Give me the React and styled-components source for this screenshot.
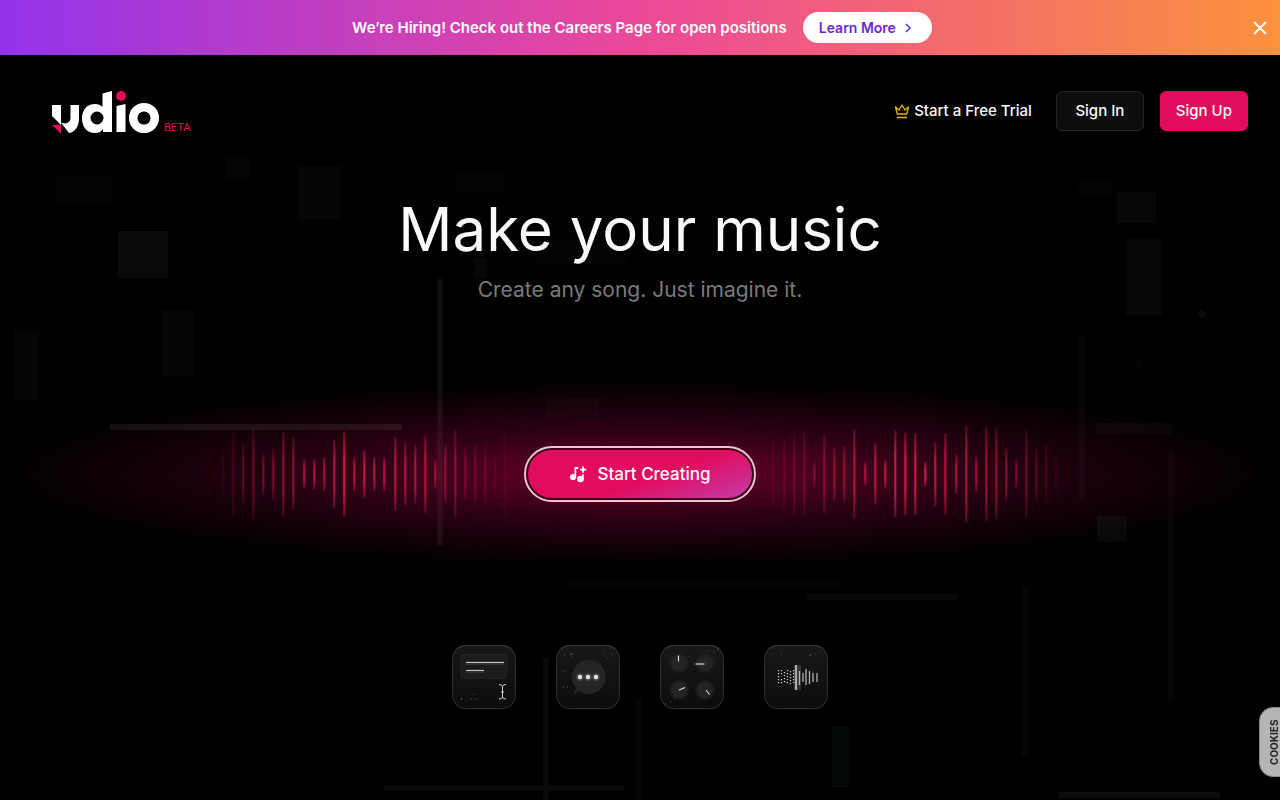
import React from "react";
import styled, { createGlobalStyle } from "styled-components";

const GlobalStyle = createGlobalStyle`
  * {
    box-sizing: border-box;
  }
  body {
    margin: 0;
    background: #000;
    color: #fafafa;
    font-family: Inter, "Liberation Sans", sans-serif;
  }
  a {
    color: inherit;
    text-decoration: none;
  }
`;

const Page = styled.div`
  position: relative;
  min-height: 100vh;
  overflow: hidden;
  background: #000;
`;

const Backdrop = styled.svg`
  position: absolute;
  inset: 0;
  z-index: 1;
  width: 100%;
  height: 100%;
  mix-blend-mode: screen;
  pointer-events: none;
`;

const Banner = styled.div`
  position: relative;
  display: flex;
  align-items: center;
  padding: 12px 12px 12px 32px;
  background: linear-gradient(to right, #9333ea, #ec4899 50%, #fb923c);
`;

const BannerContent = styled.div`
  flex: 1;
  display: flex;
  align-items: center;
  justify-content: center;
  gap: 16px;
`;

const BannerText = styled.p`
  margin: 0;
  font-size: 15px;
  line-height: 20px;
  font-weight: 600;
  color: #fff;
`;

const LearnMore = styled.a`
  display: flex;
  align-items: center;
  gap: 8px;
  padding: 6px 20px 5px 16px;
  border-radius: 20px;
  background: #fff;
  && {
    color: #6d28d9;
  }
  font-size: 14px;
  line-height: 20px;
  font-weight: 600;
`;

const CloseButton = styled.button`
  display: flex;
  padding: 0;
  border: none;
  background: none;
  color: #fff;
  cursor: pointer;
`;

const Header = styled.header`
  position: relative;
  display: flex;
  align-items: flex-start;
  justify-content: space-between;
  padding: 36px 32px 0 52px;
`;

const Brand = styled.a`
  display: flex;
  align-items: flex-end;
  gap: 4px;
`;

const Beta = styled.span`
  && {
    color: #e30b5d;
  }
  font-family: Roboto, sans-serif;
  font-size: 11px;
  line-height: 10px;
`;

const Nav = styled.nav`
  display: flex;
  align-items: center;
  gap: 16px;
`;

const TrialLink = styled.a`
  display: flex;
  align-items: center;
  gap: 4px;
  padding-right: 8px;
  font-size: 15px;
  line-height: 20px;
  font-weight: 500;
`;

const NavButton = styled.button`
  height: 40px;
  min-width: 88px;
  padding: 0 15px 2px;
  border: 1px solid ${({ $primary }) => ($primary ? "#e30b5d" : "#262626")};
  border-radius: 6px;
  background: ${({ $primary }) => ($primary ? "#e30b5d" : "#0d0d0d")};
  color: #fafafa;
  font-family: inherit;
  font-size: 15px;
  font-weight: 500;
  cursor: pointer;
`;

const Main = styled.main`
  position: relative;
  display: flex;
  flex-direction: column;
  align-items: center;
  padding: 60px 0 88px;
`;

const Title = styled.h1`
  margin: 0;
  font-size: 60px;
  line-height: 72px;
  font-weight: 400;
  text-align: center;
`;

const Subtitle = styled.p`
  margin: 10px 0 0;
  font-size: 21px;
  line-height: 30px;
  color: #7a7a7a;
  text-align: center;
`;

const Stage = styled.section`
  display: grid;
  place-items: center;
  width: 100%;
  margin-top: 64px;
  background: radial-gradient(
    ellipse 50% 44% at center,
    #74002f 0%,
    #52001f 20%,
    #300014 45%,
    #19000b 70%,
    #000 100%
  );
  & > * {
    grid-area: 1 / 1;
  }
`;

const Wave = styled.svg`
  width: 880px;
  height: 210px;
`;

const CreateRing = styled.div`
  padding: 2px;
  border: 2px solid #ecc5d5;
  border-radius: 28px;
  background: #3c0019;
`;

const CreateButton = styled.button`
  display: flex;
  align-items: center;
  gap: 8px;
  height: 48px;
  padding: 0 41px;
  border: none;
  border-radius: 24px;
  background: linear-gradient(160deg, #e30b5d 55%, #c43ca8 100%);
  color: #fff;
  font-family: inherit;
  font-size: 17px;
  font-weight: 500;
  cursor: pointer;
`;

const Features = styled.div`
  display: flex;
  gap: 40px;
  margin-top: 66px;
`;

const FeatureButton = styled.button`
  width: 64px;
  height: 64px;
  padding: 0;
  border: 1px solid #303030;
  border-top-color: #404040;
  border-radius: 14px;
  background: linear-gradient(#17181a, #0b0c0e);
  overflow: hidden;
  cursor: pointer;
  svg {
    display: block;
  }
`;

const CookieTab = styled.button`
  position: fixed;
  right: -8px;
  bottom: 23px;
  height: 70px;
  width: 29px;
  padding: 0 9px;
  border: 1px solid #8a8a8a;
  border-radius: 0 14px 14px 0;
  background: #b5b5b5;
  color: #222;
  font-family: Inter, sans-serif;
  font-size: 10px;
  font-weight: 700;
  line-height: 10px;
  writing-mode: vertical-rl;
  transform: rotate(180deg);
  cursor: pointer;
`;

// x, y, width, height, fill
const blocks = [
  [50, 174, 64, 31, "#010303"],
  [227, 158, 23, 21, "#040404"],
  [298, 166, 42, 54, "#050505"],
  [118, 231, 50, 47, "#0a0a0a"],
  [161, 310, 33, 66, "#050505"],
  [14, 331, 25, 69, "#050505"],
  [455, 173, 55, 21, "#020202"],
  [474, 258, 13, 21, "#070707"],
  [537, 240, 92, 26, "#010303"],
  [437, 279, 6, 267, "#0c0c0c"],
  [110, 424, 292, 6, "#111111"],
  [547, 398, 52, 19, "#040404"],
  [1117, 192, 39, 31, "#060808"],
  [1077, 180, 34, 16, "#030303"],
  [1126, 238, 36, 77, "#060606"],
  [1079, 335, 6, 165, "#050505"],
  [1096, 423, 76, 11, "#060606"],
  [1097, 516, 30, 26, "#070909"],
  [1168, 450, 6, 250, "#050505"],
  [918, 398, 17, 50, "#020202"],
  [807, 594, 151, 6, "#090909"],
  [568, 581, 272, 6, "#040404"],
  [1022, 586, 6, 170, "#060606"],
  [832, 727, 17, 61, "#050808"],
  [543, 658, 6, 142, "#090909"],
  [636, 698, 6, 102, "#060606"],
  [384, 785, 240, 6, "#0a0a0a"],
  [1058, 792, 162, 6, "#0c0c0c"],
];

// x, bar height, opacity
const bars = [
  [23, 48, 0.12], [33, 86, 0.2], [43, 60, 0.35], [53, 91, 0.4], [63, 42, 0.5],
  [73, 51, 0.5], [83, 84, 0.6], [93, 72, 0.65], [104, 29, 0.8], [114, 31, 0.8],
  [124, 34, 0.8], [134, 68, 0.85], [144, 86, 1], [154, 35, 0.85], [164, 48, 0.95],
  [174, 34, 0.85], [184, 34, 0.85], [195, 74, 0.85], [205, 63, 0.8], [215, 59, 0.8],
  [225, 78, 0.8], [235, 29, 0.7], [245, 58, 0.6], [255, 88, 0.55], [265, 53, 0.4],
  [275, 58, 0.35], [285, 60, 0.25], [295, 42, 0.15], [305, 91, 0.12],
  [573, 68, 0.15], [584, 73, 0.25], [594, 82, 0.3], [604, 85, 0.35], [614, 26, 0.45],
  [624, 80, 0.5], [634, 53, 0.6], [644, 57, 0.6], [654, 90, 0.75], [665, 24, 0.8],
  [675, 62, 0.9], [685, 29, 0.9], [695, 87, 1], [705, 83, 1], [715, 82, 1],
  [725, 25, 1], [735, 64, 0.9], [745, 82, 0.85], [756, 40, 0.8], [766, 97, 0.8],
  [776, 36, 0.75], [786, 95, 0.7], [796, 91, 0.65], [806, 53, 0.6], [816, 29, 0.5],
  [826, 88, 0.4], [836, 52, 0.35], [846, 61, 0.2], [856, 42, 0.12],
];

const Background = () => (
  <Backdrop viewBox="0 0 1280 800" preserveAspectRatio="xMidYMin slice" aria-hidden="true">
    {blocks.map(([x, y, w, h, fill]) => (
      <rect key={`${x}-${y}`} x={x} y={y} width={w} height={h} fill={fill} />
    ))}
    <circle cx="1202" cy="314" r="4" fill="#0b0b0b" />
    <circle cx="1139" cy="364" r="4" fill="#040404" />
  </Backdrop>
);

const Logo = () => (
  <svg width="108" height="42" viewBox="0 0 108 42" role="img" aria-label="Udio">
    <path d="M0 14h9v20L0 25z" fill="#fff" />
    <path d="M8.500 31C13 34 18.500 32 18.500 27V14H27v13c0 9-4 14-10 15z" fill="#fff" />
    <path d="M0 34h9v9z" fill="#e30b5d" />
    <path
      d="M50.500 2.500L60 0v41h-9v-3c-2 3-5 4-8 4-8 0-13-6-13-14.500S35 13 43 13c3 0 6 1 7.500 3zM45 20.500a6.500 6.500 0 1 0 0 13 6.500 6.500 0 0 0 0-13z"
      fill="#fff"
      fillRule="evenodd"
    />
    <path d="M64.500 15l9-2v28h-9z" fill="#fff" />
    <circle cx="69" cy="5" r="5" fill="#e30b5d" />
    <circle cx="92" cy="27" r="10.800" fill="none" stroke="#fff" strokeWidth="8.500" />
  </svg>
);

const CrownIcon = () => (
  <svg width="16" height="16" viewBox="0 0 16 16" fill="none" stroke="#eab308" strokeWidth="1.300" strokeLinejoin="round">
    <path d="M3.300 11L1.500 4l3.500 3L8 2l3 5 3.500-3-1.800 7zM3 14.500h10" />
  </svg>
);

const MusicPlusIcon = () => (
  <svg width="20" height="20" viewBox="0 0 20 20" fill="#fff">
    <circle cx="4" cy="13" r="3.100" />
    <circle cx="11.500" cy="15" r="3.300" />
    <path d="M5.500 3h3.800v1.900H7.200V13H5.500zM13.100 10.200h1.700V15h-1.700zM13.100 2.500h1.800v2.200h2.300v1.700h-2.300v2.300h-1.800V6.400h-2.200V4.700h2.200z" />
  </svg>
);

const Waveform = () => (
  <Wave viewBox="0 0 880 210" aria-hidden="true">
    <defs>
      <linearGradient id="bar" x1="0" y1="0" x2="0" y2="1">
        <stop offset="0" stopColor="#d8184f" stopOpacity="0.35" />
        <stop offset="0.3" stopColor="#d8184f" stopOpacity="0.9" />
        <stop offset="0.7" stopColor="#d8184f" stopOpacity="0.9" />
        <stop offset="1" stopColor="#d8184f" stopOpacity="0.35" />
      </linearGradient>
    </defs>
    {bars.map(([x, h, opacity]) => (
      <rect key={x} x={x - 0.8} y={105 - h / 2} width="2.200" height={h} rx="1" fill="url(#bar)" opacity={opacity} />
    ))}
  </Wave>
);

const LyricsArt = () => (
  <svg width="62" height="62" viewBox="0 0 62 62">
    <rect x="8" y="8.500" width="46" height="24" rx="3" fill="#1c1d1f" stroke="#242527" />
    <path d="M13 17h38M13 25h18" stroke="#999" strokeWidth="4" opacity="0.15" />
    <path d="M13 16.500h38M13 24.500h18" stroke="#c4c4c4" strokeWidth="1.200" />
    <path d="M46 38.500q3 0 3.500 2 .5-2 3.500-2M49.500 40.500v11M48 46h3M46 53q3 0 3.500-2 .5 2 3.500 2" stroke="#d0d0d0" fill="none" />
    <path d="M8.500 52v2M20 48.500h1M18 53h1M22 53h1" stroke="#555" />
  </svg>
);

const ChatArt = () => (
  <svg width="62" height="62" viewBox="0 0 62 62">
    <path d="M31 14a17 17 0 1 1-9 31l-5 3 2-6A17 17 0 0 1 31 14z" fill="#242527" />
    {[23, 31, 39].map((x) => (
      <g key={x} fill="#e4e4e4">
        <circle cx={x} cy="31" r="4" opacity="0.15" />
        <circle cx={x} cy="31" r="2.200" />
      </g>
    ))}
    <path d="M7 9h1M13 8h3M15 11h1M47 10h1M50 12h1M55 8h1M7 25h1M6 41h1M10 41h1" stroke="#555" />
  </svg>
);

const KnobsArt = () => (
  <svg width="62" height="62" viewBox="0 0 62 62">
    {[[18, 17], [44, 17], [18, 44], [44, 44]].map(([x, y]) => (
      <circle key={`${x}${y}`} cx={x} cy={y} r="9" fill="#232426" stroke="#1a1b1d" strokeWidth="2" />
    ))}
    <path d="M33 18h12" stroke="#aaa" strokeWidth="3" opacity="0.2" />
    <path d="M17.500 9.500v6M35 18h8M18 44l6-2.500M45 44l3.500 4.500" stroke="#ddd" strokeWidth="1.100" />
    <path d="M46 5h1M52 6h1M56 3h1M4 58h1M9 56h1M13 53h1" stroke="#555" />
  </svg>
);

const AudioArt = () => (
  <svg width="62" height="62" viewBox="0 0 62 62">
    <rect x="29" y="19" width="7" height="25" fill="#aaa" opacity="0.2" />
    <path
      d="M13.500 24v15M16.500 24v4M16.500 33v6M19.500 26v4M19.500 32v5M22.500 24v10M22.500 36v3M25.500 25v13M28.500 24v13"
      stroke="#ccc"
      strokeWidth="1.300"
      strokeDasharray="1.300 1.700"
    />
    <path d="M31 19v25" stroke="#aaa" strokeWidth="2.200" />
    <path d="M34.500 25v14M38 27v9M41 23v16M44.500 25v13M48 27v9M52 27v9" stroke="#b4b4b4" strokeWidth="1.300" />
    <path d="M6 8h1M15 6h1M16 9h1M44 9h3M49 8h1M54 6h1" stroke="#444" />
  </svg>
);

const features = [
  { label: "Write lyrics", Art: LyricsArt },
  { label: "Describe a song", Art: ChatArt },
  { label: "Adjust controls", Art: KnobsArt },
  { label: "Upload audio", Art: AudioArt },
];

const App = () => {
  return (
    <>
      <GlobalStyle />
      <Page>
        <Background />
        <Banner>
          <BannerContent>
            <BannerText>We’re Hiring! Check out the Careers Page for open positions</BannerText>
            <LearnMore href="#careers">
              Learn More
              <svg width="8" height="10" viewBox="0 0 8 10" fill="none" stroke="currentColor" strokeWidth="1.500">
                <path d="M2 1l4 4-4 4" />
              </svg>
            </LearnMore>
          </BannerContent>
          <CloseButton aria-label="Close banner">
            <svg width="16" height="16" viewBox="0 0 16 16" fill="none" stroke="currentColor" strokeWidth="2">
              <path d="M2 2l12 12M14 2L2 14" />
            </svg>
          </CloseButton>
        </Banner>
        <Header>
          <Brand href="#home">
            <Logo />
            <Beta>BETA</Beta>
          </Brand>
          <Nav>
            <TrialLink href="#trial">
              <CrownIcon />
              Start a Free Trial
            </TrialLink>
            <NavButton>Sign In</NavButton>
            <NavButton $primary>Sign Up</NavButton>
          </Nav>
        </Header>
        <Main>
          <Title>Make your music</Title>
          <Subtitle>Create any song. Just imagine it.</Subtitle>
          <Stage>
            <Waveform />
            <CreateRing>
              <CreateButton>
                <MusicPlusIcon />
                Start Creating
              </CreateButton>
            </CreateRing>
          </Stage>
          <Features>
            {features.map(({ label, Art }) => (
              <FeatureButton key={label} aria-label={label}>
                <Art />
              </FeatureButton>
            ))}
          </Features>
        </Main>
        <CookieTab>COOKIES</CookieTab>
      </Page>
    </>
  );
};

export default App;
